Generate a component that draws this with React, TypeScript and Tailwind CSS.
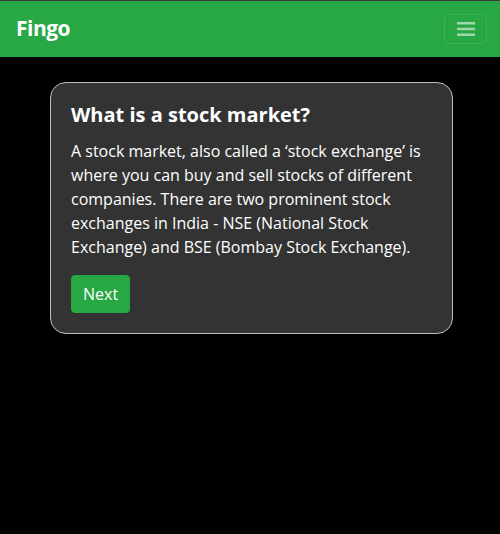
export default function App() {
  return (
    <div className="min-h-[534px] bg-black font-['Open_Sans','Noto_Sans',sans-serif] text-white">
      <div className="h-px bg-[#3a3a3a]" />
      <nav className="flex h-14 items-center justify-between bg-[#28a745] pl-4 pr-[13px]">
        <span className="text-[21px] font-bold tracking-tight">Fingo</span>
        <button className="flex h-[30px] w-[43px] items-center justify-center rounded-[5px] border border-white/10">
          <svg width="18" height="16" viewBox="0 0 18 16">
            <rect x="0" y="1" width="18" height="2.5" fill="rgba(255,255,255,0.55)" />
            <rect x="0" y="6.75" width="18" height="2.5" fill="rgba(255,255,255,0.55)" />
            <rect x="0" y="12.5" width="18" height="2.5" fill="rgba(255,255,255,0.55)" />
          </svg>
        </button>
      </nav>
      <main className="pt-[25px]">
        <div className="ml-[50px] w-[403px] rounded-2xl border border-[#bdbdbd] bg-[#333333] px-5 pt-[18px] pb-5">
          <h2 className="text-[20px] font-bold leading-[28px]">What is a stock market?</h2>
          <p className="mt-[10px] text-[16px] leading-6">
            A stock market, also called a ‘stock exchange’ is
            <br />
            where you can buy and sell stocks of different
            <br />
            companies. There are two prominent stock
            <br />
            exchanges in India - NSE (National Stock
            <br />
            Exchange) and BSE (Bombay Stock Exchange).
          </p>
          <button className="mt-4 rounded-[4px] border border-[#28a745] bg-[#28a745] px-[11px] py-1.5 text-[16px] leading-6">
            Next
          </button>
        </div>
      </main>
    </div>
  );
}
